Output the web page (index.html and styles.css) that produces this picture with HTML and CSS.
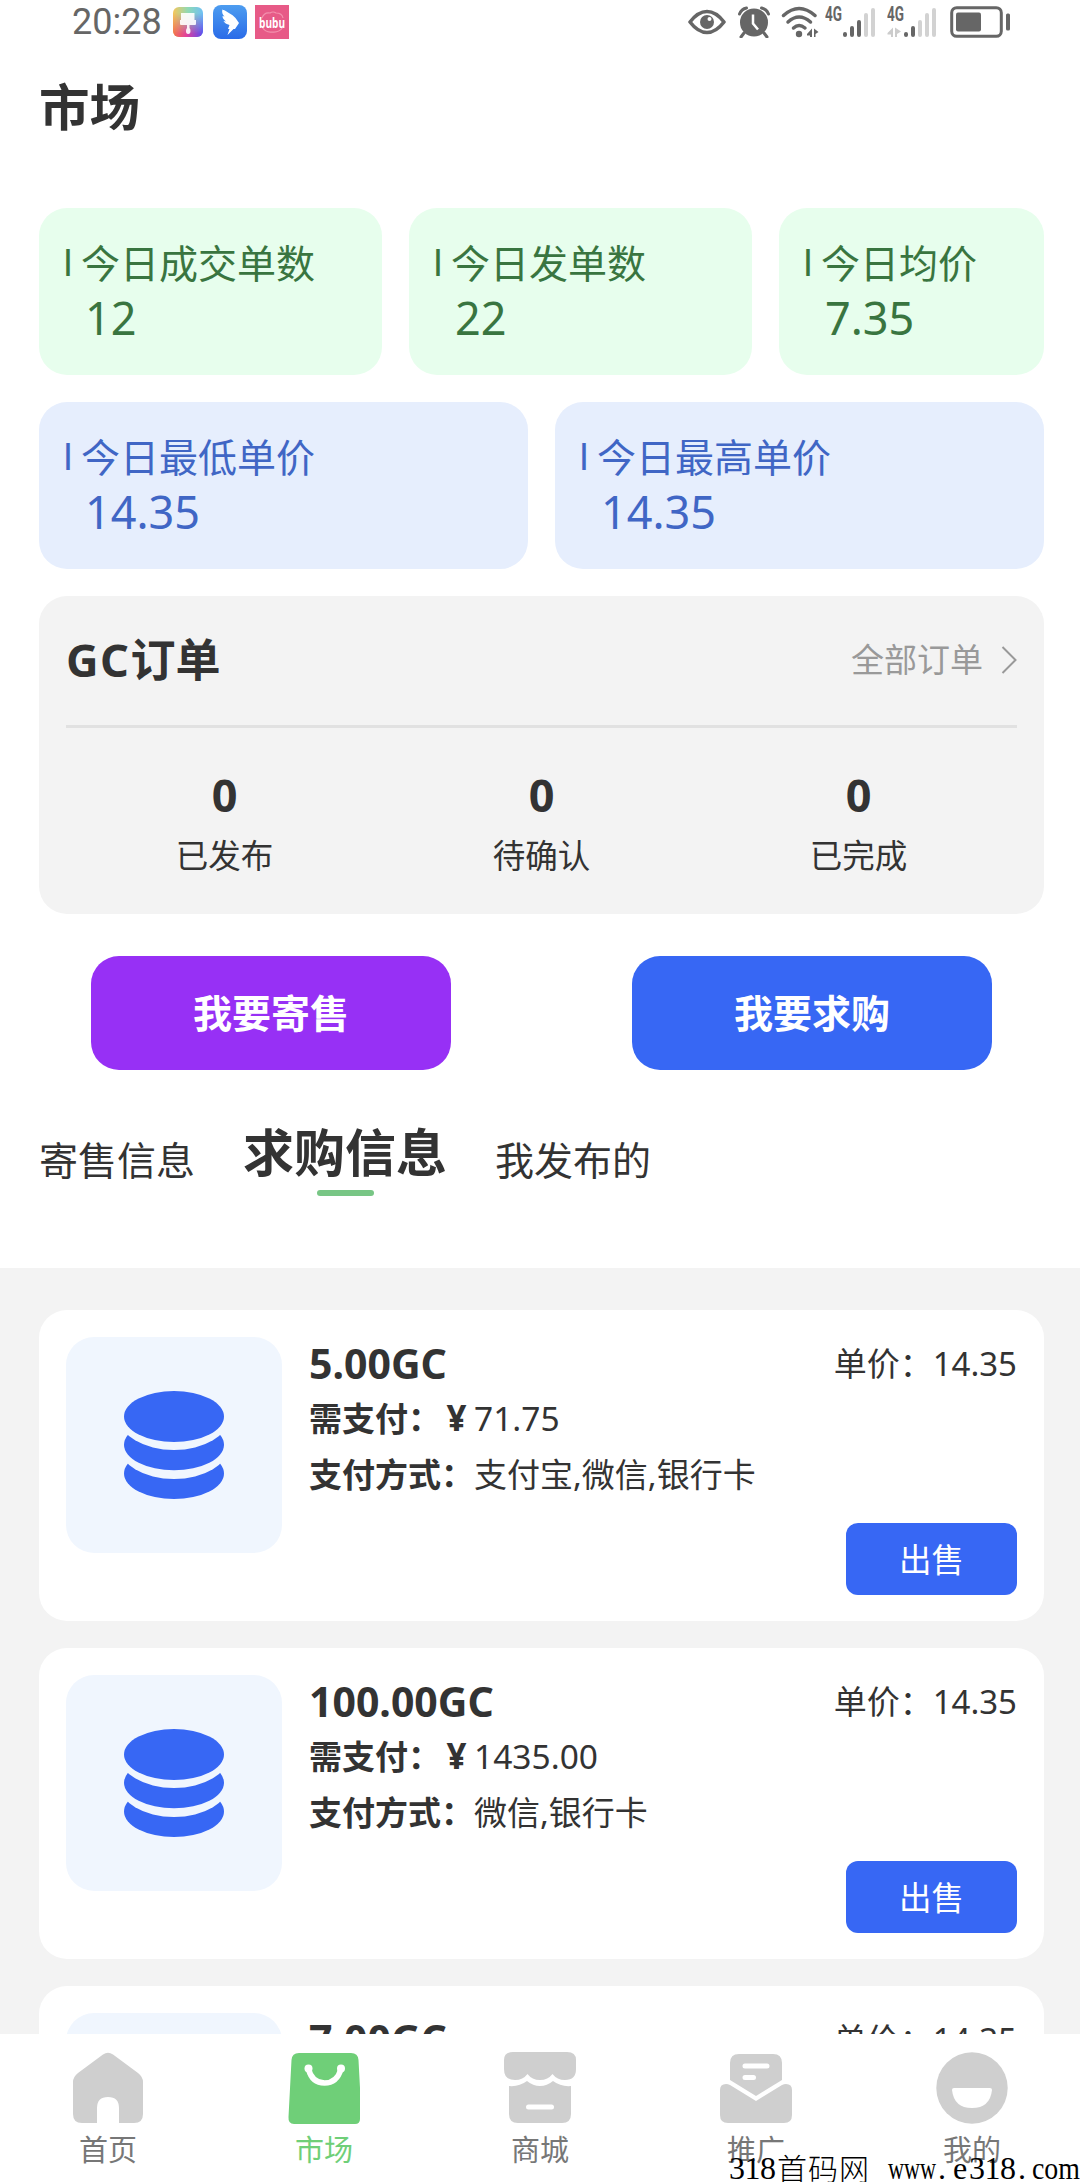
FILE: index.html
```html
<!DOCTYPE html>
<html lang="zh-CN">
<head>
<meta charset="utf-8">
<title>市场</title>
<link rel="stylesheet" href="styles.css">
</head>
<body>
<svg width="0" height="0" class="defs" aria-hidden="true">
  <symbol id="coins" viewBox="0 0 100 108">
    <ellipse cx="50" cy="82.500" rx="50" ry="25.500" fill="#3767f4"/>
    <ellipse cx="50" cy="54.700" rx="55" ry="33.300" fill="#f0f6fe"/>
    <ellipse cx="50" cy="53.700" rx="50" ry="25.500" fill="#3767f4"/>
    <ellipse cx="50" cy="26" rx="55" ry="33" fill="#f0f6fe"/>
    <ellipse cx="50" cy="25.500" rx="50" ry="25.500" fill="#3767f4"/>
  </symbol>
</svg>
<div class="app">
  <header class="status">
    <span class="clock">20:28</span>
    <svg class="app-brush" width="30" height="30" viewBox="0 0 30 30">
      <defs>
        <linearGradient id="g1" x1="0" y1="0" x2="1" y2="0"><stop offset="0" stop-color="#f6c65a"/><stop offset=".5" stop-color="#8fd9b4"/><stop offset="1" stop-color="#6fc0f5"/></linearGradient>
        <linearGradient id="g2" x1="0" y1="0" x2="1" y2="0"><stop offset="0" stop-color="#f4744a"/><stop offset=".45" stop-color="#e2409c"/><stop offset="1" stop-color="#5a4cf0"/></linearGradient>
        <linearGradient id="g3" x1="0" y1="0" x2="0" y2="1"><stop offset=".2" stop-color="#fff" stop-opacity="0"/><stop offset=".9" stop-color="#fff"/></linearGradient>
        <mask id="m1"><rect width="30" height="30" fill="url(#g3)"/></mask>
      </defs>
      <rect width="30" height="30" rx="6" fill="url(#g1)"/>
      <rect width="30" height="30" rx="6" fill="url(#g2)" mask="url(#m1)"/>
      <path d="M8 6h13.500v7H23v4q0 1-1 1h-5.500v3q1 1 1 3 0 3-2.300 3T13 24q0-2 1-3v-3H8q-1 0-1-1v-4h1z" fill="#fff" fill-opacity=".9"/>
    </svg>
    <svg class="app-bird" width="34" height="34" viewBox="0 0 34 34">
      <defs><linearGradient id="g4" x1="0" y1="0" x2="0" y2="1"><stop offset="0" stop-color="#4d9df0"/><stop offset="1" stop-color="#2a6be8"/></linearGradient></defs>
      <rect width="34" height="34" rx="8" fill="url(#g4)"/>
      <path d="M9 4c5 3 10 5 13.500 9l3.500 5-4 6h-1.500l-6 6 2-6h-1.500l1.500-4c-3-1-5-2-6-4l2.500.5c-2-2-3.500-3-3.500-5.500l2 .5c-2-2-3-4-2-7.500z" fill="#fff"/>
    </svg>
    <svg class="app-bubu" width="34" height="34" viewBox="0 0 34 34">
      <rect width="34" height="34" fill="#e75a87"/>
      <path d="M7 13q2-6 8-5 3-2 6 0 6 0 7 5M7 22q4 6 10 5 7 1 11-5" fill="none" stroke="#f391ae" stroke-width="1.200"/>
      <text x="17" y="23" text-anchor="middle" textLength="26" lengthAdjust="spacingAndGlyphs" class="bubu">bubu</text>
    </svg>
    <div class="status-icons">
      <svg width="38" height="26" viewBox="0 0 38 26"><path d="M2 13Q10 2.500 19 2.500T36 13Q28 23.500 19 23.500T2 13z" fill="none" stroke="#666" stroke-width="3.600" stroke-linejoin="round"/><circle cx="19" cy="13" r="7" fill="#666"/><circle cx="21.500" cy="10" r="2" fill="#fff"/></svg>
      <svg width="32" height="32" viewBox="0 0 32 32"><circle cx="16" cy="16.500" r="14" fill="#666"/><path d="M1.500 8q2-5 7-6M30.500 8q-2-5-7-6M6 27l-3 4M26 27l3 4" fill="none" stroke="#666" stroke-width="3" stroke-linecap="round"/><path d="M15 8.500v9l5 6" fill="none" stroke="#fff" stroke-width="2.500"/></svg>
      <svg width="38" height="32" viewBox="0 0 38 32"><g fill="none" stroke="#666" stroke-width="3.500" stroke-linecap="round"><path d="M2.500 9.500Q18 -4.500 34 9.500"/><path d="M7 16Q18 6 29.500 16"/><path d="M12.500 22Q18 17 24 22"/></g><circle cx="18" cy="28" r="3.200" fill="#666"/><path d="M31 31v-8.500L26 28v1.500h3V31zM33 22.500V31h1.500v-3l3-2z" fill="#666"/></svg>
      <svg width="52" height="32" viewBox="0 0 52 32"><text x="0" y="15" class="net" textLength="17" lengthAdjust="spacingAndGlyphs">4G</text><g stroke-width="4" stroke-linecap="round"><path d="M20 28v1M27 22v7M34 16v13" stroke="#666"/><path d="M41 9v20M48 4v25" stroke="#d2d2d2"/></g></svg>
      <svg class="sim2" width="52" height="32" viewBox="0 0 52 32"><text x="0" y="15" class="net" textLength="17" lengthAdjust="spacingAndGlyphs">4G</text><path d="M6 31V21.500L.5 27v1.500H4V31zM8 21.500V31h2v-3l4-2.500z" fill="#ccc"/><g stroke-width="4" stroke-linecap="round"><path d="M19 28v1M26 22v7" stroke="#666"/><path d="M33 16v13M40 9v20M47 4v25" stroke="#d2d2d2"/></g></svg>
      <svg width="60" height="32" viewBox="0 0 60 32"><rect x="1.700" y="1.700" width="49.600" height="28.600" rx="5" fill="none" stroke="#666" stroke-width="3"/><rect x="6" y="6.500" width="25" height="19" rx="2" fill="#666"/><rect x="56" y="7.500" width="4" height="17" rx="1.500" fill="#666"/></svg>
    </div>
  </header>

  <h1 class="title">市场</h1>

  <section class="stats stats-green">
    <div class="stat"><div class="stat-label"><span class="tick">I</span>今日成交单数</div><div class="stat-value">12</div></div>
    <div class="stat"><div class="stat-label"><span class="tick">I</span>今日发单数</div><div class="stat-value">22</div></div>
    <div class="stat"><div class="stat-label"><span class="tick">I</span>今日均价</div><div class="stat-value">7.35</div></div>
  </section>
  <section class="stats stats-blue">
    <div class="stat"><div class="stat-label"><span class="tick">I</span>今日最低单价</div><div class="stat-value">14.35</div></div>
    <div class="stat"><div class="stat-label"><span class="tick">I</span>今日最高单价</div><div class="stat-value">14.35</div></div>
  </section>

  <section class="orders">
    <div class="orders-head">
      <h2><span class="latin">GC</span>订单</h2>
      <a class="all">全部订单<svg width="16" height="28" viewBox="0 0 16 28"><path d="M1.500 1l13 13-13 13" fill="none" stroke="#999" stroke-width="2"/></svg></a>
    </div>
    <div class="orders-grid">
      <div><b>0</b><span>已发布</span></div>
      <div><b>0</b><span>待确认</span></div>
      <div><b>0</b><span>已完成</span></div>
    </div>
  </section>

  <section class="actions">
    <button class="action sell">我要寄售</button>
    <button class="action buy">我要求购</button>
  </section>

  <nav class="tabs">
    <span class="tab">寄售信息</span>
    <span class="tab active">求购信息</span>
    <span class="tab">我发布的</span>
  </nav>

  <main class="list">
    <article class="card">
      <div class="thumb"><svg width="100" height="108"><use href="#coins"/></svg></div>
      <div class="info">
        <div class="row top"><strong>5.00GC</strong><span>单价：<i>14.35</i></span></div>
        <div class="row"><b>需支付：<em>¥</em></b><i>71.75</i></div>
        <div class="row"><b>支付方式：</b><span>支付宝,微信,银行卡</span></div>
        <button class="trade">出售</button>
      </div>
    </article>
    <article class="card">
      <div class="thumb"><svg width="100" height="108"><use href="#coins"/></svg></div>
      <div class="info">
        <div class="row top"><strong>100.00GC</strong><span>单价：<i>14.35</i></span></div>
        <div class="row"><b>需支付：<em>¥</em></b><i>1435.00</i></div>
        <div class="row"><b>支付方式：</b><span>微信,银行卡</span></div>
        <button class="trade">出售</button>
      </div>
    </article>
    <article class="card">
      <div class="thumb"></div>
      <div class="info">
        <div class="row top"><strong>7.00GC</strong><span>单价：<i>14.35</i></span></div>
      </div>
    </article>
  </main>

  <footer class="tabbar">
    <a class="nav"><svg width="72" height="72" viewBox="0 0 72 72"><path d="M31 2.500Q36 -1 41 2.500L66 21q5 4 5 9v32q0 9-9 9H47V56q0-11-11-11T25 56v15H10q-9 0-9-9V30q0-5 5-9z" fill="#cfcfcf"/></svg>首页</a>
    <a class="nav on"><svg width="72" height="72" viewBox="0 0 72 72"><path d="M11 1h52q7 0 7.500 7L72 36v31q0 5-5 5H6q-6 0-5.500-7L3.500 8q.5-7 7.500-7z" fill="#6fcf78"/><path d="M20.500 17Q24 31 36.500 31T53 17" fill="none" stroke="#fff" stroke-width="5.500" stroke-linecap="round"/><circle cx="20.500" cy="16.500" r="4" fill="#fff"/><circle cx="53" cy="16.500" r="4" fill="#fff"/></svg>市场</a>
    <a class="nav"><svg width="72" height="72" viewBox="0 0 72 72"><path d="M9 0h54q9 0 9 8v9q0 11-11 11-8 0-12.500-6Q44 28 36 28t-12.500-6Q19 28 11 28 0 28 0 17V8q0-8 9-8z" fill="#cfcfcf"/><path d="M5 34q10 1 18-5 6 5 13 5t13-5q8 6 18 5v28q0 9-9 9H14q-9 0-9-9z" fill="#cfcfcf"/><path d="M24.500 55h23" stroke="#fff" stroke-width="5" stroke-linecap="round"/></svg>商城</a>
    <a class="nav"><svg width="72" height="72" viewBox="0 0 72 72"><path d="M19 2h34q9 0 9 9v17L36 44 10 28V11q0-9 9-9z" fill="#cfcfcf"/><path d="M0 38q0-6 6-6 2 0 4 1l26 16 26-16q2-1 4-1 6 0 6 6v25q0 8-8 8H8q-8 0-8-8z" fill="#cfcfcf"/><path d="M25 14h22M25 25.500h8.500" stroke="#fff" stroke-width="5" stroke-linecap="round"/></svg>推广</a>
    <a class="nav"><svg width="72" height="72" viewBox="0 0 72 72"><circle cx="36" cy="36" r="35.700" fill="#cfcfcf"/><path d="M18 36h36q2 0 2 2-2 18-20 18T16 38q0-2 2-2z" fill="#fff"/></svg>我的</a>
  </footer>

  <svg class="watermark" width="352" height="36" viewBox="0 0 352 36">
    <text x="1" y="31" textLength="47">318</text>
    <text x="49" y="32" class="cjk" textLength="92">首码网</text>
    <text x="160" y="31" textLength="48" lengthAdjust="spacingAndGlyphs">www</text>
    <text x="210" y="31">.</text>
    <text x="225" y="31">e</text>
    <text x="241" y="31" textLength="47">318</text>
    <text x="290" y="31">.</text>
    <text x="304" y="31" textLength="48" lengthAdjust="spacingAndGlyphs">com</text>
  </svg>
</div>
</body>
</html>
```
FILE: styles.css
```css
* { box-sizing: border-box; }
body {
  margin: 0;
  background: #fff;
  color: #333;
  font-family: "Noto Sans", "Noto Sans CJK SC", sans-serif;
}
h1, h2 { margin: 0; }
i, em { font-style: normal; }
svg { display: block; flex: none; }
button { border: 0; padding: 0; font-family: inherit; color: #fff; }
.defs { position: absolute; }

.app {
  position: relative;
  display: flex;
  flex-direction: column;
  width: 1080px;
  height: 2182px;
  overflow: hidden;
}

/* system status bar */
.status {
  display: flex;
  align-items: center;
  height: 44px;
  padding: 0 70px 0 72px;
}
.clock { width: 101px; font: 36px/44px Roboto, sans-serif; color: #666; }
.app-bird { margin-left: 10px; }
.app-bubu { margin-left: 8px; }
.bubu { font: bold 15px "Open Sans", sans-serif; fill: #fff; }
.status-icons {
  display: flex;
  align-items: center;
  gap: 11px;
  margin-left: auto;
}
.status-icons svg:nth-child(1) { margin-right: 1px; }
.status-icons svg:nth-child(4) { margin-left: -5px; }
.status-icons .sim2 { margin-left: -1px; }
.net { font: bold 20px "Roboto", sans-serif; fill: #666; }

.title {
  height: 164px;
  padding: 28px 39px 0;
  font-size: 50.5px;
  line-height: 70px;
}

/* daily figures */
.stats { display: flex; gap: 27px; margin: 0 36px 27px 39px; }
.stat { height: 167px; padding: 26px 27px; border-radius: 28px; }
.stats-green .stat { width: 343px; background: #e7feed; color: #397540; }
.stats-green .stat:last-child { width: 265px; }
.stats-blue .stat { width: 489px; background: #e6eefd; color: #4066c5; }
.stat-label {
  display: flex;
  font-size: 39px;
  line-height: 57px;
  white-space: nowrap;
}
.tick { width: 15px; margin-left: -3px; margin-right: 3px; font: 37px/57px Inter, sans-serif; }
.stat-value { padding: 2px 0 0 19px; font-size: 45px; line-height: 50px; }

/* order summary */
.orders {
  height: 318px;
  margin: 0 36px 0 39px;
  padding: 0 27px;
  border-radius: 28px;
  background: #f3f3f3;
}
.orders-head {
  display: flex;
  justify-content: space-between;
  align-items: center;
  height: 132px;
  padding-bottom: 2px;
  border-bottom: 3px solid #e1e1e1;
}
.orders-head h2 { font-size: 45px; line-height: 60px; }
.latin { letter-spacing: 1.5px; }
.all { display: flex; align-items: center; gap: 18px; font-size: 33px; line-height: 60px; color: #999; }
.orders-grid {
  display: grid;
  grid-template-columns: repeat(3, 1fr);
  padding-top: 37px;
  text-align: center;
}
.orders-grid b, .orders-grid span { display: block; line-height: 60px; }
.orders-grid b { font-size: 45px; }
.orders-grid span { padding-top: 1px; font-size: 32.5px; }

.actions { display: flex; gap: 181px; padding: 42px 88px 0 91px; }
.action { width: 360px; height: 114px; border-radius: 28px; font-size: 39px; font-weight: 700; line-height: 114px; }
.sell { background: #9730f5; }
.buy { background: #3767f4; }

/* listing tabs */
.tabs { display: flex; gap: 48px; height: 198px; padding: 47px 39px 0; }
.tab { padding-top: 8px; font-size: 39px; line-height: 70px; }
.tab.active { padding-top: 0; font-size: 51px; font-weight: 700; }
.tab.active::after {
  content: "";
  display: block;
  width: 57px;
  height: 6px;
  margin: 3px auto 0;
  border-radius: 3px;
  background: #78c685;
}

/* listings */
.list {
  flex: 1;
  min-height: 0;
  overflow: hidden;
  display: flex;
  flex-direction: column;
  gap: 27px;
  padding: 42px 36px 0 39px;
  background: #f3f3f3;
}
.card {
  flex: none;
  display: flex;
  gap: 27px;
  height: 311px;
  padding: 27px;
  border-radius: 28px;
  background: #fff;
}
.thumb {
  flex: none;
  display: flex;
  align-items: center;
  justify-content: center;
  width: 216px;
  height: 216px;
  border-radius: 28px;
  background: #f0f6fe;
}
.info { flex: 1; display: flex; flex-direction: column; }
.row { display: flex; font-size: 33px; line-height: 56px; }
.row i { font-size: 33.5px; }
.row em { display: inline-block; width: 33px; font-size: 35px; text-align: center; text-indent: -2px; }
.row.top { justify-content: space-between; line-height: 53px; }
.row.top i { font-size: 33px; }
.row strong { font-size: 41px; }
.trade {
  align-self: flex-end;
  width: 171px;
  height: 72px;
  margin-top: 20px;
  border-radius: 12px;
  background: #3767f4;
  font-size: 32.5px;
  line-height: 73px;
}

.tabbar { display: flex; height: 148px; padding-top: 18px; background: #fff; }
.nav {
  flex: 1;
  display: flex;
  flex-direction: column;
  align-items: center;
  font-size: 29px;
  line-height: 52px;
  color: #777;
}
.nav.on { color: #6fcf78; }

.watermark { position: absolute; right: 0; bottom: -2px; font: 32px "Liberation Serif", serif; fill: #000; }
.watermark .cjk { font: 300 30px "Noto Sans CJK SC", sans-serif; }
```
